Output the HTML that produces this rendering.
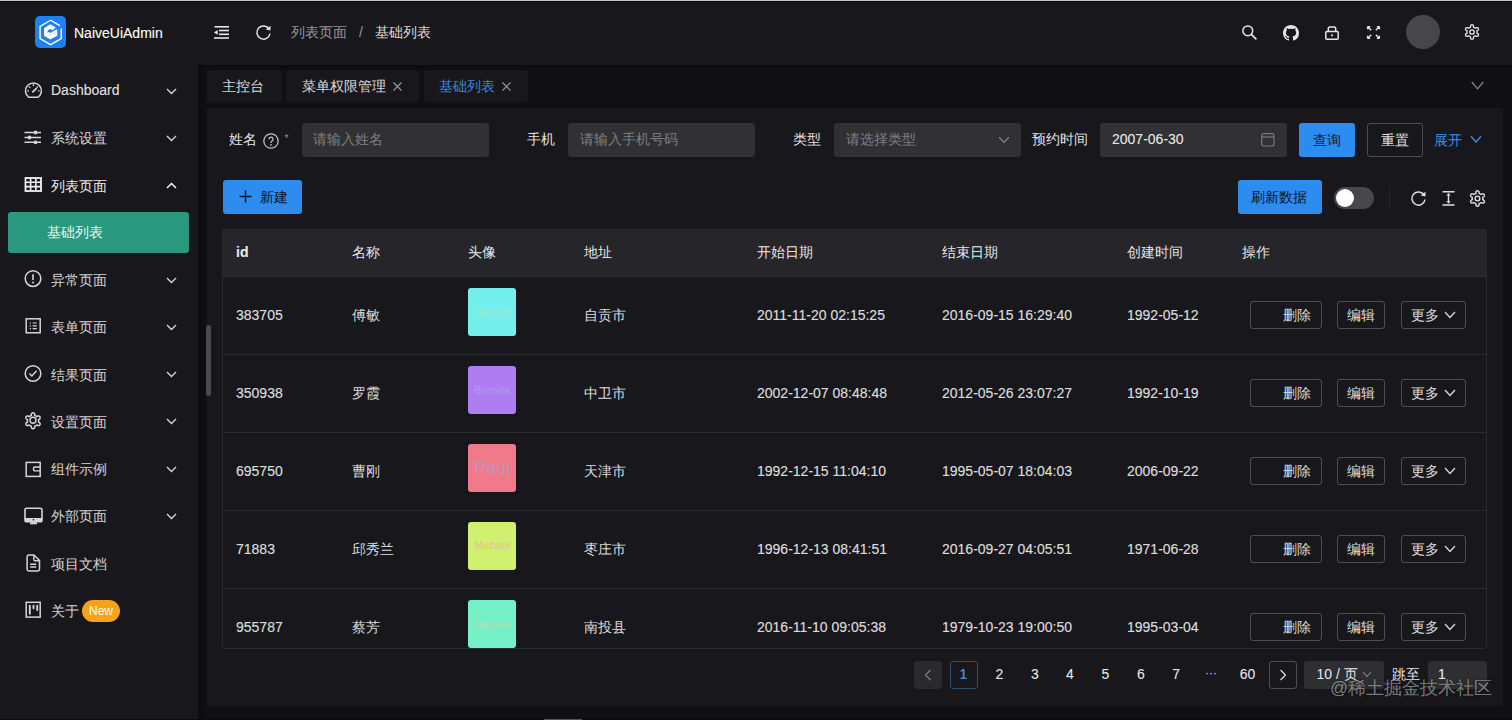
<!DOCTYPE html>
<html><head><meta charset="utf-8">
<style>
*{box-sizing:border-box;margin:0;padding:0}
html,body{width:1512px;height:720px;overflow:hidden;background:#101014;font-family:"Liberation Sans",sans-serif;font-size:14px;color:rgba(255,255,255,0.82)}
.a{position:absolute;white-space:nowrap;line-height:20px}
svg{position:absolute;overflow:visible}
#topline{position:absolute;left:0;top:0;width:1512px;height:1px;background:#c6c5ca;border-bottom:0}
#topdark{position:absolute;left:0;top:1px;width:1512px;height:1px;background:#0c0c10}
#header{position:absolute;left:0;top:2px;width:1512px;height:63px;background:#18181c}
#sider{position:absolute;left:0;top:65px;width:198px;height:655px;background:#18181c}
#card{position:absolute;left:207px;top:108px;width:1296px;height:598px;background:#18181c;border-radius:2px}
.tab{position:absolute;top:70px;height:32px;background:#18181c;border-radius:2px}
.inp{position:absolute;top:123px;height:34px;width:187px;background:#313134;border-radius:3px}
.ph{color:rgba(255,255,255,0.38)}
.btnp{position:absolute;background:#2d8cf0;border-radius:3px;color:#000}
.btnb{position:absolute;border:1px solid rgba(255,255,255,0.24);border-radius:3px}
#table{position:absolute;left:222px;top:229px;width:1265px;height:420px;border:1px solid #2a2a2e;border-radius:3px;overflow:hidden;background:#18181c}
#thead{position:absolute;left:0;top:0;width:1263px;height:47px;background:#26262a;border-bottom:1px solid #2c2c30}
.sep{position:absolute;left:0;width:1263px;height:1px;background:#2a2a2e}
.av{position:absolute;left:245px;width:48px;height:48px;border-radius:3px;overflow:hidden;font-size:11px;line-height:48px;text-align:center}
.mi{color:rgba(255,255,255,0.82)}
.b{-webkit-text-stroke:0.2px rgba(255,255,255,0.55)}
</style></head><body>
<div id="topline"></div><div id="topdark"></div>
<div id="header"></div>
<!-- logo -->
<div class="a" style="left:35px;top:16px;width:31px;height:32px;background:#1f80f6;border-radius:5px"></div>
<svg style="left:35px;top:16px" width="32" height="32" viewBox="0 0 32 32">
<path d="M24.8 9.6 L15.6 4.2 L5.1 10.3 L5.1 22.6 L15.6 28.6 L26.2 22.6 L26.2 12.4" fill="none" stroke="#fff" stroke-width="1.4"/>
<path d="M15.2 8.3 L20.8 11.5 L17.6 14.2 L15.2 13 L12.6 14.6 L12.6 17.8 L15.2 19.4 L22.3 15.2 L22.3 19.7 L15.2 23.6 L9.1 19.7 L9.1 12.3 Z" fill="#fff"/>
<path d="M13.6 15.9 L15.3 17 L21.5 13.4 L22.3 13.9 L22.3 15.2 L15.2 19.4 L12.6 17.8 L12.6 16.5 Z" fill="#fff"/>
</svg>
<div class="a b" style="left:74px;top:22.7px;color:#fff;font-size:14px;letter-spacing:0px">NaiveUiAdmin</div>
<!-- menu fold icon -->
<svg style="left:214px;top:26px" width="15" height="13" viewBox="0 0 15 13" fill="#e6e6e6">
<rect x="0.5" y="0" width="14.5" height="1.6"/><rect x="5" y="3.7" width="10" height="1.6"/><rect x="5" y="7.5" width="10" height="1.6"/><rect x="0" y="11.2" width="15" height="1.6"/>
<path d="M0 6.4 L3.6 4 L3.6 8.8 Z"/>
</svg>
<!-- reload -->
<svg style="left:255px;top:24px" width="17" height="17" viewBox="0 0 17 17">
<path d="M14.2 5.2 A6.6 6.6 0 1 0 15 9.5" fill="none" stroke="#e6e6e6" stroke-width="1.5"/>
<path d="M15.6 1.8 L15.4 6.6 L10.8 5.6 Z" fill="#e6e6e6"/>
</svg>
<div class="a" style="left:291px;top:22.3px;color:rgba(255,255,255,0.55)">列表页面</div>
<div class="a" style="left:359px;top:22.3px;color:rgba(255,255,255,0.55)">/</div>
<div class="a" style="left:375px;top:22.3px;color:rgba(255,255,255,0.85)">基础列表</div>
<!-- search -->
<svg style="left:1242px;top:25px" width="15" height="15" viewBox="0 0 15 15">
<circle cx="5.8" cy="5.8" r="4.9" fill="none" stroke="#e6e6e6" stroke-width="1.5"/>
<path d="M9.4 9.4 L14.4 14.4" stroke="#e6e6e6" stroke-width="1.6"/>
</svg>
<!-- github -->
<svg style="left:1283px;top:25px" width="16" height="16" viewBox="0 0 16 16">
<path fill="#e6e6e6" d="M8 0C3.58 0 0 3.58 0 8c0 3.54 2.29 6.53 5.47 7.59.4.07.55-.17.55-.38 0-.19-.01-.82-.01-1.49-2.01.37-2.53-.49-2.69-.94-.09-.23-.48-.94-.82-1.13-.28-.15-.68-.52-.01-.53.63-.01 1.08.58 1.23.82.72 1.21 1.87.87 2.33.66.07-.52.28-.87.51-1.07-1.78-.2-3.64-.89-3.64-3.95 0-.87.31-1.59.82-2.15-.08-.2-.36-1.02.08-2.12 0 0 .67-.21 2.2.82.64-.18 1.32-.27 2-.27.68 0 1.36.09 2 .27 1.53-1.04 2.2-.82 2.2-.82.44 1.1.16 1.92.08 2.12.51.56.82 1.27.82 2.15 0 3.07-1.87 3.75-3.65 3.95.29.25.54.73.54 1.48 0 1.07-.01 1.93-.01 2.2 0 .21.15.46.55.38A8.013 8.013 0 0016 8c0-4.42-3.58-8-8-8z"/>
</svg>
<!-- lock -->
<svg style="left:1325px;top:25px" width="14" height="15" viewBox="0 0 14 15">
<rect x="0.8" y="6.6" width="12.4" height="7.6" rx="1" fill="none" stroke="#e6e6e6" stroke-width="1.5"/>
<path d="M3.3 6.6 V3.6 A1.6 1.6 0 0 1 4.9 2 H9.1 A1.6 1.6 0 0 1 10.7 3.6 V6.6" fill="none" stroke="#e6e6e6" stroke-width="1.5"/>
<rect x="6.2" y="9.3" width="1.6" height="2" fill="#e6e6e6"/>
</svg>
<!-- fullscreen -->
<svg style="left:1367px;top:26px" width="13" height="13" viewBox="0 0 13 13" fill="none" stroke="#e6e6e6" stroke-width="1.4">
<path d="M0.8 0.8 L4.2 4.2 M0.6 0.6 h2.6 M0.6 0.6 v2.6"/>
<path d="M12.2 0.8 L8.8 4.2 M12.4 0.6 h-2.6 M12.4 0.6 v2.6"/>
<path d="M0.8 12.2 L4.2 8.8 M0.6 12.4 h2.6 M0.6 12.4 v-2.6"/>
<path d="M12.2 12.2 L8.8 8.8 M12.4 12.4 h-2.6 M12.4 12.4 v-2.6"/>
</svg>
<div class="a" style="left:1406px;top:15px;width:34px;height:34px;border-radius:50%;background:#474749"></div>
<!-- gear -->
<svg style="left:1464px;top:24px" width="16" height="16" viewBox="0 0 16 16">
<path d="M13.00 8.00 L13.00 8.22 L12.98 8.44 L12.96 8.65 L12.92 8.87 L12.88 9.08 L13.82 9.56 L14.17 9.94 L14.37 10.32 L14.48 10.68 L14.50 11.03 L14.45 11.36 L14.32 11.65 L14.13 11.91 L13.88 12.11 L13.56 12.27 L13.19 12.36 L12.77 12.37 L12.26 12.26 L11.38 11.69 L11.21 11.83 L11.04 11.97 L10.87 12.10 L10.69 12.22 L10.50 12.33 L10.31 12.44 L10.11 12.53 L9.91 12.62 L9.71 12.70 L9.50 12.77 L9.56 13.82 L9.40 14.31 L9.18 14.68 L8.92 14.95 L8.63 15.15 L8.32 15.26 L8.00 15.30 L7.68 15.26 L7.37 15.15 L7.08 14.95 L6.82 14.68 L6.60 14.31 L6.44 13.82 L6.50 12.77 L6.29 12.70 L6.09 12.62 L5.89 12.53 L5.69 12.44 L5.50 12.33 L5.31 12.22 L5.13 12.10 L4.96 11.97 L4.79 11.83 L4.62 11.69 L3.74 12.26 L3.23 12.37 L2.81 12.36 L2.44 12.27 L2.12 12.11 L1.87 11.91 L1.68 11.65 L1.55 11.36 L1.50 11.03 L1.52 10.68 L1.63 10.32 L1.83 9.94 L2.18 9.56 L3.12 9.08 L3.08 8.87 L3.04 8.65 L3.02 8.44 L3.00 8.22 L3.00 8.00 L3.00 7.78 L3.02 7.56 L3.04 7.35 L3.08 7.13 L3.12 6.92 L2.18 6.44 L1.83 6.06 L1.63 5.68 L1.52 5.32 L1.50 4.97 L1.55 4.64 L1.68 4.35 L1.87 4.09 L2.12 3.89 L2.44 3.73 L2.81 3.64 L3.23 3.63 L3.74 3.74 L4.62 4.31 L4.79 4.17 L4.96 4.03 L5.13 3.90 L5.31 3.78 L5.50 3.67 L5.69 3.56 L5.89 3.47 L6.09 3.38 L6.29 3.30 L6.50 3.23 L6.44 2.18 L6.60 1.69 L6.82 1.32 L7.08 1.05 L7.37 0.85 L7.68 0.74 L8.00 0.70 L8.32 0.74 L8.63 0.85 L8.92 1.05 L9.18 1.32 L9.40 1.69 L9.56 2.18 L9.50 3.23 L9.71 3.30 L9.91 3.38 L10.11 3.47 L10.31 3.56 L10.50 3.67 L10.69 3.78 L10.87 3.90 L11.04 4.03 L11.21 4.17 L11.38 4.31 L12.26 3.74 L12.77 3.63 L13.19 3.64 L13.56 3.73 L13.88 3.89 L14.13 4.09 L14.32 4.35 L14.45 4.64 L14.50 4.97 L14.48 5.32 L14.37 5.68 L14.17 6.06 L13.82 6.44 L12.88 6.92 L12.92 7.13 L12.96 7.35 L12.98 7.56 L13.00 7.78 Z" fill="none" stroke="#e6e6e6" stroke-width="1.3" stroke-linejoin="round"/>
<circle cx="8" cy="8" r="2.2" fill="none" stroke="#e6e6e6" stroke-width="1.3"/>
</svg>

<div id="sider"></div>
<!-- sidebar -->
<div class="a" style="left:8px;top:212px;width:181px;height:41px;background:#2a987e;border-radius:3px"></div>
<div class="a mi b" style="left:51px;top:80px;color:rgba(255,255,255,0.88)">Dashboard</div>
<svg style="left:166px;top:87.5px" width="11" height="7" viewBox="0 0 11 7"><path d="M1 1 L5.5 5.5 L10 1" fill="none" stroke="#d6d6d6" stroke-width="1.4"/></svg>
<div class="a mi" style="left:51px;top:128.3px">系统设置</div>
<svg style="left:166px;top:134.8px" width="11" height="7" viewBox="0 0 11 7"><path d="M1 1 L5.5 5.5 L10 1" fill="none" stroke="#d6d6d6" stroke-width="1.4"/></svg>
<div class="a mi" style="left:51px;top:175.5px;color:rgba(255,255,255,0.95)">列表页面</div>
<svg style="left:166px;top:182.0px" width="11" height="7" viewBox="0 0 11 7"><path d="M1 6 L5.5 1.5 L10 6" fill="none" stroke="#f4f4f4" stroke-width="1.5"/></svg>
<div class="a" style="left:47px;top:221.6px;color:#e4f8f0">基础列表</div>
<div class="a mi" style="left:51px;top:270.1px">异常页面</div>
<svg style="left:166px;top:276.6px" width="11" height="7" viewBox="0 0 11 7"><path d="M1 1 L5.5 5.5 L10 1" fill="none" stroke="#d6d6d6" stroke-width="1.4"/></svg>
<div class="a mi" style="left:51px;top:317.4px">表单页面</div>
<svg style="left:166px;top:323.9px" width="11" height="7" viewBox="0 0 11 7"><path d="M1 1 L5.5 5.5 L10 1" fill="none" stroke="#d6d6d6" stroke-width="1.4"/></svg>
<div class="a mi" style="left:51px;top:364.6px">结果页面</div>
<svg style="left:166px;top:371.1px" width="11" height="7" viewBox="0 0 11 7"><path d="M1 1 L5.5 5.5 L10 1" fill="none" stroke="#d6d6d6" stroke-width="1.4"/></svg>
<div class="a mi" style="left:51px;top:411.9px">设置页面</div>
<svg style="left:166px;top:418.4px" width="11" height="7" viewBox="0 0 11 7"><path d="M1 1 L5.5 5.5 L10 1" fill="none" stroke="#d6d6d6" stroke-width="1.4"/></svg>
<div class="a mi" style="left:51px;top:459.2px">组件示例</div>
<svg style="left:166px;top:465.7px" width="11" height="7" viewBox="0 0 11 7"><path d="M1 1 L5.5 5.5 L10 1" fill="none" stroke="#d6d6d6" stroke-width="1.4"/></svg>
<div class="a mi" style="left:51px;top:506.4px">外部页面</div>
<svg style="left:166px;top:512.9px" width="11" height="7" viewBox="0 0 11 7"><path d="M1 1 L5.5 5.5 L10 1" fill="none" stroke="#d6d6d6" stroke-width="1.4"/></svg>
<div class="a mi" style="left:51px;top:553.7px">项目文档</div>
<div class="a mi" style="left:51px;top:601.0px">关于</div>
<svg style="left:24px;top:81px" width="19" height="19" viewBox="0 0 19 19"><path d="M4.67 16.25 A7.95 7.95 0 1 1 14.23 16.25 Z" fill="none" stroke="#d6d6d6" stroke-width="1.5" stroke-linejoin="round"/><path d="M9.45 3.2 V5 M3.4 9.9 H5 M13.9 9.9 H15.5 M5.1 5.6 L6.2 6.7 M13.8 5.6 L12.7 6.7" stroke="#d6d6d6" stroke-width="1.4"/><path d="M8.8 10.9 L12.2 7.6" stroke="#d6d6d6" stroke-width="1.8" stroke-linecap="round"/></svg>
<svg style="left:24px;top:129px" width="19" height="19" viewBox="0 0 19 19"><path d="M0.5 3.5 H17 M0.5 8.5 H17 M0.5 13.3 H17" stroke="#d6d6d6" stroke-width="1.4"/><circle cx="11.5" cy="3.5" r="1.9" fill="#d6d6d6"/><circle cx="5.5" cy="8.5" r="1.9" fill="#d6d6d6"/><circle cx="11.5" cy="13.3" r="1.9" fill="#d6d6d6"/></svg>
<svg style="left:24px;top:176px" width="19" height="19" viewBox="0 0 19 19"><rect x="1.5" y="2" width="15.5" height="13" fill="none" stroke="#f4f4f4" stroke-width="1.8"/><path d="M1.5 6.3 H17 M1.5 10.6 H17 M6.6 2 V15 M11.8 2 V15" stroke="#f4f4f4" stroke-width="1.6"/></svg>
<svg style="left:24px;top:270px" width="19" height="19" viewBox="0 0 19 19"><circle cx="9" cy="8.6" r="7.8" fill="none" stroke="#d6d6d6" stroke-width="1.5"/><path d="M9 4.2 V10" stroke="#d6d6d6" stroke-width="1.6"/><circle cx="9" cy="12.6" r="1" fill="#d6d6d6"/></svg>
<svg style="left:24px;top:317px" width="19" height="19" viewBox="0 0 19 19"><rect x="2.2" y="1.8" width="14" height="14" fill="none" stroke="#d6d6d6" stroke-width="1.5"/><path d="M5.8 6 H7 M5.8 8.8 H7 M5.8 11.6 H7 M8.6 6 H12.8 M8.6 8.8 H12.8 M8.6 11.6 H12.8" stroke="#d6d6d6" stroke-width="1.2"/></svg>
<svg style="left:24px;top:365px" width="19" height="19" viewBox="0 0 19 19"><circle cx="9" cy="8.5" r="7.8" fill="none" stroke="#d6d6d6" stroke-width="1.5"/><path d="M5.4 8.4 L7.9 11 L12.6 5.8" fill="none" stroke="#d6d6d6" stroke-width="1.5"/></svg>
<svg style="left:24px;top:412px" width="19" height="19" viewBox="0 0 19 19"><path d="M14.60 8.80 L14.59 9.04 L14.58 9.29 L14.55 9.53 L14.51 9.77 L14.47 10.01 L15.45 10.53 L15.80 10.94 L16.01 11.35 L16.11 11.75 L16.13 12.13 L16.07 12.48 L15.93 12.80 L15.72 13.08 L15.44 13.31 L15.11 13.49 L14.71 13.59 L14.26 13.62 L13.72 13.52 L12.78 12.93 L12.60 13.09 L12.41 13.24 L12.21 13.39 L12.01 13.52 L11.80 13.65 L11.59 13.77 L11.37 13.88 L11.14 13.97 L10.92 14.06 L10.68 14.14 L10.73 15.25 L10.54 15.76 L10.30 16.15 L10.01 16.43 L9.69 16.64 L9.35 16.76 L9.00 16.80 L8.65 16.76 L8.31 16.64 L7.99 16.43 L7.70 16.15 L7.46 15.76 L7.27 15.25 L7.32 14.14 L7.08 14.06 L6.86 13.97 L6.63 13.88 L6.41 13.77 L6.20 13.65 L5.99 13.52 L5.79 13.39 L5.59 13.24 L5.40 13.09 L5.22 12.93 L4.28 13.52 L3.74 13.62 L3.29 13.59 L2.89 13.49 L2.56 13.31 L2.28 13.08 L2.07 12.80 L1.93 12.48 L1.87 12.13 L1.89 11.75 L1.99 11.35 L2.20 10.94 L2.55 10.53 L3.53 10.01 L3.49 9.77 L3.45 9.53 L3.42 9.29 L3.41 9.04 L3.40 8.80 L3.41 8.56 L3.42 8.31 L3.45 8.07 L3.49 7.83 L3.53 7.59 L2.55 7.07 L2.20 6.66 L1.99 6.25 L1.89 5.85 L1.87 5.47 L1.93 5.12 L2.07 4.80 L2.28 4.52 L2.56 4.29 L2.89 4.11 L3.29 4.01 L3.74 3.98 L4.28 4.08 L5.22 4.67 L5.40 4.51 L5.59 4.36 L5.79 4.21 L5.99 4.08 L6.20 3.95 L6.41 3.83 L6.63 3.72 L6.86 3.63 L7.08 3.54 L7.32 3.46 L7.27 2.35 L7.46 1.84 L7.70 1.45 L7.99 1.17 L8.31 0.96 L8.65 0.84 L9.00 0.80 L9.35 0.84 L9.69 0.96 L10.01 1.17 L10.30 1.45 L10.54 1.84 L10.73 2.35 L10.68 3.46 L10.92 3.54 L11.14 3.63 L11.37 3.72 L11.59 3.83 L11.80 3.95 L12.01 4.08 L12.21 4.21 L12.41 4.36 L12.60 4.51 L12.78 4.67 L13.72 4.08 L14.26 3.98 L14.71 4.01 L15.11 4.11 L15.44 4.29 L15.72 4.52 L15.93 4.80 L16.07 5.12 L16.13 5.47 L16.11 5.85 L16.01 6.25 L15.80 6.66 L15.45 7.07 L14.47 7.59 L14.51 7.83 L14.55 8.07 L14.58 8.31 L14.59 8.56 Z" fill="none" stroke="#d6d6d6" stroke-width="1.5" stroke-linejoin="round"/><circle cx="9" cy="8.3" r="3" fill="none" stroke="#d6d6d6" stroke-width="1.4"/></svg>
<svg style="left:24px;top:460.5px" width="19" height="19" viewBox="0 0 19 19"><rect x="2.2" y="1.4" width="14" height="14" fill="none" stroke="#d6d6d6" stroke-width="1.5"/><path d="M16.2 6 H10.8 A1.3 1.3 0 0 0 9.5 7.3 V8.6 A1.3 1.3 0 0 0 10.8 9.9 H16.2" fill="none" stroke="#d6d6d6" stroke-width="1.4"/></svg>
<svg style="left:24px;top:507px" width="19" height="19" viewBox="0 0 19 19"><rect x="1" y="1.2" width="17" height="13.5" rx="1.8" fill="none" stroke="#d6d6d6" stroke-width="1.6"/><rect x="1" y="11" width="17" height="3.7" fill="#d6d6d6"/><path d="M6 16.3 H13" stroke="#d6d6d6" stroke-width="2"/><path d="M8.6 14.5 V16 M10.4 14.5 V16" stroke="#d6d6d6" stroke-width="1.4"/><circle cx="9.5" cy="12.8" r="0.8" fill="#18181c"/></svg>
<svg style="left:24px;top:554px" width="19" height="19" viewBox="0 0 19 19"><path d="M4.8 1 H10 L15.5 6.5 V15.2 A1.7 1.7 0 0 1 13.8 16.9 H4.8 A1.7 1.7 0 0 1 3.1 15.2 V2.7 A1.7 1.7 0 0 1 4.8 1 Z" fill="none" stroke="#d6d6d6" stroke-width="1.5" stroke-linejoin="round"/><path d="M9.8 1.2 V5.4 A1.4 1.4 0 0 0 11.2 6.8 H15.4" fill="none" stroke="#d6d6d6" stroke-width="1.4"/><path d="M6.2 10.2 H12.2 M6.2 13 H12.2" stroke="#d6d6d6" stroke-width="1.6"/></svg>
<svg style="left:24px;top:601px" width="19" height="19" viewBox="0 0 19 19"><rect x="2.2" y="1.3" width="14" height="14.8" fill="none" stroke="#d6d6d6" stroke-width="1.5"/><path d="M5.8 4.8 V12.8 M9.5 4.8 V7.3 M13.2 4.8 V9" stroke="#d6d6d6" stroke-width="1.9" stroke-linecap="round"/></svg>
<div class="a" style="left:82px;top:600px;width:38px;height:22px;border-radius:11px;background:#f5a31a;color:#fff;font-size:12px;line-height:22px;text-align:center">New</div>

<div class="a" style="left:198px;top:65px;width:9px;height:655px;background:linear-gradient(to right,rgba(0,0,0,0.22),rgba(0,0,0,0))"></div>
<div class="a" style="left:198px;top:65px;width:1314px;height:6px;background:linear-gradient(to bottom,rgba(0,0,0,0.22),rgba(0,0,0,0))"></div>
<div class="tab" style="left:207px;width:75px"></div>
<div class="tab" style="left:286px;width:133px"></div>
<div class="tab" style="left:424px;width:104px"></div>
<div id="card"></div>
<!-- tabs -->
<div class="a" style="left:222px;top:75.7px;color:rgba(255,255,255,0.85)">主控台</div>
<div class="a" style="left:302px;top:75.7px;color:rgba(255,255,255,0.85)">菜单权限管理</div>
<svg style="left:393px;top:82.3px" width="9" height="9" viewBox="0 0 9 9"><path d="M0.5 0.5 L8.5 8.5 M8.5 0.5 L0.5 8.5" stroke="#9a9a9c" stroke-width="1.1"/></svg>
<div class="a" style="left:439px;top:75.7px;color:#3a86d8">基础列表</div>
<svg style="left:502px;top:82.3px" width="9" height="9" viewBox="0 0 9 9"><path d="M0.5 0.5 L8.5 8.5 M8.5 0.5 L0.5 8.5" stroke="#9a9a9c" stroke-width="1.1"/></svg>
<svg style="left:1471px;top:81px" width="13" height="9" viewBox="0 0 13 9"><path d="M0.8 1 L6.5 7.8 L12.2 1" fill="none" stroke="#88888a" stroke-width="1.2"/></svg>
<!-- form -->
<div class="a" style="left:229px;top:129px;color:rgba(255,255,255,0.9)">姓名</div>
<svg style="left:263px;top:132.6px" width="17" height="17" viewBox="0 0 17 17"><circle cx="8" cy="8" r="7.2" fill="none" stroke="#c8c8c8" stroke-width="1.2"/><path d="M5.9 6.3 A2.1 2.1 0 1 1 8.8 8.2 C8.2 8.5 8 8.9 8 9.6 V10" fill="none" stroke="#c8c8c8" stroke-width="1.2"/><circle cx="8" cy="11.9" r="0.8" fill="#c8c8c8"/></svg>
<div class="a" style="left:284.5px;top:133px;color:#c87898;font-size:10px;line-height:12px">*</div>
<div class="inp" style="left:302px"></div>
<div class="a ph" style="left:313px;top:129px">请输入姓名</div>
<div class="a" style="left:527px;top:129px;color:rgba(255,255,255,0.9)">手机</div>
<div class="inp" style="left:568px"></div>
<div class="a ph" style="left:580px;top:129px">请输入手机号码</div>
<div class="a" style="left:793px;top:129px;color:rgba(255,255,255,0.9)">类型</div>
<div class="inp" style="left:834px"></div>
<div class="a ph" style="left:846px;top:129px">请选择类型</div>
<svg style="left:998px;top:136px" width="12" height="8" viewBox="0 0 12 8"><path d="M1 1.2 L6 6.5 L11 1.2" fill="none" stroke="#8a8a8c" stroke-width="1.2"/></svg>
<div class="a" style="left:1032px;top:129px;color:rgba(255,255,255,0.9)">预约时间</div>
<div class="inp" style="left:1100px"></div>
<div class="a b" style="left:1112px;top:129px;color:rgba(255,255,255,0.9)">2007-06-30</div>
<svg style="left:1261px;top:133px" width="14" height="14" viewBox="0 0 14 14"><rect x="0.7" y="0.7" width="12.3" height="12.3" rx="2" fill="none" stroke="#7a7a7c" stroke-width="1.2"/><path d="M0.7 4 H13" stroke="#7a7a7c" stroke-width="1.2"/></svg>
<div class="btnp" style="left:1299px;top:123px;width:56px;height:34px"></div>
<div class="a" style="left:1313px;top:130px;color:#101a2a">查询</div>
<div class="btnb" style="left:1367px;top:123px;width:56px;height:34px"></div>
<div class="a" style="left:1381px;top:130px;color:rgba(255,255,255,0.9)">重置</div>
<div class="a" style="left:1434px;top:130px;color:#3b8fe6">展开</div>
<svg style="left:1470px;top:135px" width="12" height="9" viewBox="0 0 12 9"><path d="M1 1.2 L6 7 L11 1.2" fill="none" stroke="#3b8fe6" stroke-width="1.4"/></svg>
<!-- toolbar -->
<div class="btnp" style="left:223px;top:180px;width:79px;height:34px"></div>
<svg style="left:239px;top:190px" width="13" height="13" viewBox="0 0 13 13"><path d="M6.5 0.5 V12.5 M0.5 6.5 H12.5" stroke="#0a1424" stroke-width="1.5"/></svg>
<div class="a" style="left:260px;top:187px;color:#0a1424">新建</div>
<div class="btnp" style="left:1238px;top:180px;width:84px;height:34px"></div>
<div class="a" style="left:1251px;top:187px;color:#0a1424">刷新数据</div>
<div class="a" style="left:1334px;top:187px;width:40px;height:22px;border-radius:11px;background:#48484c"></div>
<div class="a" style="left:1336px;top:189px;width:18px;height:18px;border-radius:50%;background:#fff"></div>
<div class="a" style="left:1389px;top:187px;width:1px;height:22px;background:#26262a"></div>
<svg style="left:1410px;top:190px" width="17" height="17" viewBox="0 0 17 17"><path d="M14.2 5.2 A6.6 6.6 0 1 0 15 9.5" fill="none" stroke="#e0e0e0" stroke-width="1.5"/><path d="M15.6 1.8 L15.4 6.6 L10.8 5.6 Z" fill="#e0e0e0"/></svg>
<svg style="left:1442px;top:191px" width="13" height="15" viewBox="0 0 13 15"><path d="M0.5 0.8 H12.5 M0.5 14 H12.5 M6.5 2.5 V12.3" stroke="#e0e0e0" stroke-width="1.4"/><path d="M4.3 4.6 L6.5 2.2 L8.7 4.6 Z M4.3 10.2 L6.5 12.6 L8.7 10.2 Z" fill="#e0e0e0"/></svg>
<svg style="left:1469px;top:190px" width="17" height="17" viewBox="0 0 16 16"><path d="M13.00 8.00 L13.00 8.22 L12.98 8.44 L12.96 8.65 L12.92 8.87 L12.88 9.08 L13.82 9.56 L14.17 9.94 L14.37 10.32 L14.48 10.68 L14.50 11.03 L14.45 11.36 L14.32 11.65 L14.13 11.91 L13.88 12.11 L13.56 12.27 L13.19 12.36 L12.77 12.37 L12.26 12.26 L11.38 11.69 L11.21 11.83 L11.04 11.97 L10.87 12.10 L10.69 12.22 L10.50 12.33 L10.31 12.44 L10.11 12.53 L9.91 12.62 L9.71 12.70 L9.50 12.77 L9.56 13.82 L9.40 14.31 L9.18 14.68 L8.92 14.95 L8.63 15.15 L8.32 15.26 L8.00 15.30 L7.68 15.26 L7.37 15.15 L7.08 14.95 L6.82 14.68 L6.60 14.31 L6.44 13.82 L6.50 12.77 L6.29 12.70 L6.09 12.62 L5.89 12.53 L5.69 12.44 L5.50 12.33 L5.31 12.22 L5.13 12.10 L4.96 11.97 L4.79 11.83 L4.62 11.69 L3.74 12.26 L3.23 12.37 L2.81 12.36 L2.44 12.27 L2.12 12.11 L1.87 11.91 L1.68 11.65 L1.55 11.36 L1.50 11.03 L1.52 10.68 L1.63 10.32 L1.83 9.94 L2.18 9.56 L3.12 9.08 L3.08 8.87 L3.04 8.65 L3.02 8.44 L3.00 8.22 L3.00 8.00 L3.00 7.78 L3.02 7.56 L3.04 7.35 L3.08 7.13 L3.12 6.92 L2.18 6.44 L1.83 6.06 L1.63 5.68 L1.52 5.32 L1.50 4.97 L1.55 4.64 L1.68 4.35 L1.87 4.09 L2.12 3.89 L2.44 3.73 L2.81 3.64 L3.23 3.63 L3.74 3.74 L4.62 4.31 L4.79 4.17 L4.96 4.03 L5.13 3.90 L5.31 3.78 L5.50 3.67 L5.69 3.56 L5.89 3.47 L6.09 3.38 L6.29 3.30 L6.50 3.23 L6.44 2.18 L6.60 1.69 L6.82 1.32 L7.08 1.05 L7.37 0.85 L7.68 0.74 L8.00 0.70 L8.32 0.74 L8.63 0.85 L8.92 1.05 L9.18 1.32 L9.40 1.69 L9.56 2.18 L9.50 3.23 L9.71 3.30 L9.91 3.38 L10.11 3.47 L10.31 3.56 L10.50 3.67 L10.69 3.78 L10.87 3.90 L11.04 4.03 L11.21 4.17 L11.38 4.31 L12.26 3.74 L12.77 3.63 L13.19 3.64 L13.56 3.73 L13.88 3.89 L14.13 4.09 L14.32 4.35 L14.45 4.64 L14.50 4.97 L14.48 5.32 L14.37 5.68 L14.17 6.06 L13.82 6.44 L12.88 6.92 L12.92 7.13 L12.96 7.35 L12.98 7.56 L13.00 7.78 Z" fill="none" stroke="#e0e0e0" stroke-width="1.3" stroke-linejoin="round"/><circle cx="8" cy="8" r="2.2" fill="none" stroke="#e0e0e0" stroke-width="1.3"/></svg>


<!-- table -->
<div id="table"><div id="thead"></div>
<div class="a b" style="left:13.0px;top:12.3px;font-weight:bold;color:rgba(255,255,255,0.92);">id</div>
<div class="a" style="left:129.0px;top:12.3px;color:rgba(255,255,255,0.9);">名称</div>
<div class="a" style="left:245.0px;top:12.3px;color:rgba(255,255,255,0.9);">头像</div>
<div class="a" style="left:361.0px;top:12.3px;color:rgba(255,255,255,0.9);">地址</div>
<div class="a" style="left:534.0px;top:12.3px;color:rgba(255,255,255,0.9);">开始日期</div>
<div class="a" style="left:719.0px;top:12.3px;color:rgba(255,255,255,0.9);">结束日期</div>
<div class="a" style="left:904.0px;top:12.3px;color:rgba(255,255,255,0.9);">创建时间</div>
<div class="a" style="left:1019.0px;top:12.3px;color:rgba(255,255,255,0.9);">操作</div>
<div class="sep" style="top:124px"></div>
<div class="a b" style="left:13.0px;top:75.0px;color:rgba(255,255,255,0.86)">383705</div>
<div class="a" style="left:129.0px;top:75.0px;color:rgba(255,255,255,0.86)">傅敏</div>
<div class="a" style="left:361.0px;top:75.0px;color:rgba(255,255,255,0.86)">自贡市</div>
<div class="a b" style="left:534.0px;top:75.0px;color:rgba(255,255,255,0.86)">2011-11-20 02:15:25</div>
<div class="a b" style="left:719.0px;top:75.0px;color:rgba(255,255,255,0.86)">2016-09-15 16:29:40</div>
<div class="a b" style="left:904.0px;top:75.0px;color:rgba(255,255,255,0.86)">1992-05-12</div>
<div class="av" style="left:245.0px;top:58.0px;background:#75eeee;color:#a8e8c0;font-size:10.8px">Lennon</div>
<div class="btnb" style="left:1027.0px;top:71.0px;width:72px;height:28px"></div>
<div class="a" style="left:1060.0px;top:75.0px;color:rgba(255,255,255,0.86)">删除</div>
<div class="btnb" style="left:1114.0px;top:71.0px;width:48px;height:28px"></div>
<div class="a" style="left:1124.0px;top:75.0px;color:rgba(255,255,255,0.86)">编辑</div>
<div class="btnb" style="left:1178.0px;top:71.0px;width:65px;height:28px"></div>
<div class="a" style="left:1187.5px;top:75.0px;color:rgba(255,255,255,0.86)">更多</div>
<svg style="left:1221.0px;top:81.0px" width="12" height="8" viewBox="0 0 12 8"><path d="M1 1 L6 6.5 L11 1" fill="none" stroke="#d8d8d8" stroke-width="1.3"/></svg>
<div class="sep" style="top:202px"></div>
<div class="a b" style="left:13.0px;top:153.0px;color:rgba(255,255,255,0.86)">350938</div>
<div class="a" style="left:129.0px;top:153.0px;color:rgba(255,255,255,0.86)">罗霞</div>
<div class="a" style="left:361.0px;top:153.0px;color:rgba(255,255,255,0.86)">中卫市</div>
<div class="a b" style="left:534.0px;top:153.0px;color:rgba(255,255,255,0.86)">2002-12-07 08:48:48</div>
<div class="a b" style="left:719.0px;top:153.0px;color:rgba(255,255,255,0.86)">2012-05-26 23:07:27</div>
<div class="a b" style="left:904.0px;top:153.0px;color:rgba(255,255,255,0.86)">1992-10-19</div>
<div class="av" style="left:245.0px;top:136.0px;background:#b07cf2;color:#a8a0ec;font-size:11.2px">Brenda</div>
<div class="btnb" style="left:1027.0px;top:149.0px;width:72px;height:28px"></div>
<div class="a" style="left:1060.0px;top:153.0px;color:rgba(255,255,255,0.86)">删除</div>
<div class="btnb" style="left:1114.0px;top:149.0px;width:48px;height:28px"></div>
<div class="a" style="left:1124.0px;top:153.0px;color:rgba(255,255,255,0.86)">编辑</div>
<div class="btnb" style="left:1178.0px;top:149.0px;width:65px;height:28px"></div>
<div class="a" style="left:1187.5px;top:153.0px;color:rgba(255,255,255,0.86)">更多</div>
<svg style="left:1221.0px;top:159.0px" width="12" height="8" viewBox="0 0 12 8"><path d="M1 1 L6 6.5 L11 1" fill="none" stroke="#d8d8d8" stroke-width="1.3"/></svg>
<div class="sep" style="top:280px"></div>
<div class="a b" style="left:13.0px;top:231.0px;color:rgba(255,255,255,0.86)">695750</div>
<div class="a" style="left:129.0px;top:231.0px;color:rgba(255,255,255,0.86)">曹刚</div>
<div class="a" style="left:361.0px;top:231.0px;color:rgba(255,255,255,0.86)">天津市</div>
<div class="a b" style="left:534.0px;top:231.0px;color:rgba(255,255,255,0.86)">1992-12-15 11:04:10</div>
<div class="a b" style="left:719.0px;top:231.0px;color:rgba(255,255,255,0.86)">1995-05-07 18:04:03</div>
<div class="a b" style="left:904.0px;top:231.0px;color:rgba(255,255,255,0.86)">2006-09-22</div>
<div class="av" style="left:245.0px;top:214.0px;background:#f07a8a;color:#c890b8;font-size:18px">Paul</div>
<div class="btnb" style="left:1027.0px;top:227.0px;width:72px;height:28px"></div>
<div class="a" style="left:1060.0px;top:231.0px;color:rgba(255,255,255,0.86)">删除</div>
<div class="btnb" style="left:1114.0px;top:227.0px;width:48px;height:28px"></div>
<div class="a" style="left:1124.0px;top:231.0px;color:rgba(255,255,255,0.86)">编辑</div>
<div class="btnb" style="left:1178.0px;top:227.0px;width:65px;height:28px"></div>
<div class="a" style="left:1187.5px;top:231.0px;color:rgba(255,255,255,0.86)">更多</div>
<svg style="left:1221.0px;top:237.0px" width="12" height="8" viewBox="0 0 12 8"><path d="M1 1 L6 6.5 L11 1" fill="none" stroke="#d8d8d8" stroke-width="1.3"/></svg>
<div class="sep" style="top:358px"></div>
<div class="a b" style="left:13.0px;top:309.0px;color:rgba(255,255,255,0.86)">71883</div>
<div class="a" style="left:129.0px;top:309.0px;color:rgba(255,255,255,0.86)">邱秀兰</div>
<div class="a" style="left:361.0px;top:309.0px;color:rgba(255,255,255,0.86)">枣庄市</div>
<div class="a b" style="left:534.0px;top:309.0px;color:rgba(255,255,255,0.86)">1996-12-13 08:41:51</div>
<div class="a b" style="left:719.0px;top:309.0px;color:rgba(255,255,255,0.86)">2016-09-27 04:05:51</div>
<div class="a b" style="left:904.0px;top:309.0px;color:rgba(255,255,255,0.86)">1971-06-28</div>
<div class="av" style="left:245.0px;top:292.0px;background:#d2f070;color:#e0c098;font-size:10.4px">Michael</div>
<div class="btnb" style="left:1027.0px;top:305.0px;width:72px;height:28px"></div>
<div class="a" style="left:1060.0px;top:309.0px;color:rgba(255,255,255,0.86)">删除</div>
<div class="btnb" style="left:1114.0px;top:305.0px;width:48px;height:28px"></div>
<div class="a" style="left:1124.0px;top:309.0px;color:rgba(255,255,255,0.86)">编辑</div>
<div class="btnb" style="left:1178.0px;top:305.0px;width:65px;height:28px"></div>
<div class="a" style="left:1187.5px;top:309.0px;color:rgba(255,255,255,0.86)">更多</div>
<svg style="left:1221.0px;top:315.0px" width="12" height="8" viewBox="0 0 12 8"><path d="M1 1 L6 6.5 L11 1" fill="none" stroke="#d8d8d8" stroke-width="1.3"/></svg>
<div class="a b" style="left:13.0px;top:387.0px;color:rgba(255,255,255,0.86)">955787</div>
<div class="a" style="left:129.0px;top:387.0px;color:rgba(255,255,255,0.86)">蔡芳</div>
<div class="a" style="left:361.0px;top:387.0px;color:rgba(255,255,255,0.86)">南投县</div>
<div class="a b" style="left:534.0px;top:387.0px;color:rgba(255,255,255,0.86)">2016-11-10 09:05:38</div>
<div class="a b" style="left:719.0px;top:387.0px;color:rgba(255,255,255,0.86)">1979-10-23 19:00:50</div>
<div class="a b" style="left:904.0px;top:387.0px;color:rgba(255,255,255,0.86)">1995-03-04</div>
<div class="av" style="left:245.0px;top:370.0px;background:#76f0c6;color:#b8e0b0;font-size:9px">Margaret</div>
<div class="btnb" style="left:1027.0px;top:383.0px;width:72px;height:28px"></div>
<div class="a" style="left:1060.0px;top:387.0px;color:rgba(255,255,255,0.86)">删除</div>
<div class="btnb" style="left:1114.0px;top:383.0px;width:48px;height:28px"></div>
<div class="a" style="left:1124.0px;top:387.0px;color:rgba(255,255,255,0.86)">编辑</div>
<div class="btnb" style="left:1178.0px;top:383.0px;width:65px;height:28px"></div>
<div class="a" style="left:1187.5px;top:387.0px;color:rgba(255,255,255,0.86)">更多</div>
<svg style="left:1221.0px;top:393.0px" width="12" height="8" viewBox="0 0 12 8"><path d="M1 1 L6 6.5 L11 1" fill="none" stroke="#d8d8d8" stroke-width="1.3"/></svg>
</div>
<!-- pagination -->
<div class="a" style="left:914px;top:661px;width:28px;height:28px;border-radius:3px;background:#2a2a2e"></div>
<svg style="left:924px;top:669px" width="8" height="12" viewBox="0 0 8 12"><path d="M6.5 1 L1.5 6 L6.5 11" fill="none" stroke="#808084" stroke-width="1.2"/></svg>
<div class="a" style="left:949.5px;top:661px;width:28px;height:28px;border-radius:3px;border:1px solid #2a4c70"></div>
<div class="a b" style="left:949.5px;top:663.6px;width:28px;text-align:center;color:#3b8fe6">1</div>
<div class="a b" style="left:985.3px;top:663.6px;width:28px;text-align:center;color:rgba(255,255,255,0.9)">2</div>
<div class="a b" style="left:1020.9px;top:663.6px;width:28px;text-align:center;color:rgba(255,255,255,0.9)">3</div>
<div class="a b" style="left:1056.0px;top:663.6px;width:28px;text-align:center;color:rgba(255,255,255,0.9)">4</div>
<div class="a b" style="left:1091.4px;top:663.6px;width:28px;text-align:center;color:rgba(255,255,255,0.9)">5</div>
<div class="a b" style="left:1127.0px;top:663.6px;width:28px;text-align:center;color:rgba(255,255,255,0.9)">6</div>
<div class="a b" style="left:1162.2px;top:663.6px;width:28px;text-align:center;color:rgba(255,255,255,0.9)">7</div>
<div class="a" style="left:1197px;top:662.5px;width:28px;text-align:center;color:rgba(255,255,255,0.8);font-size:12px">···</div>
<div class="a b" style="left:1233.5px;top:663.6px;width:28px;text-align:center;color:rgba(255,255,255,0.9)">60</div>
<div class="btnb" style="left:1269px;top:661px;width:28px;height:28px"></div>
<svg style="left:1279px;top:669px" width="8" height="12" viewBox="0 0 8 12"><path d="M1.5 1 L6.5 6 L1.5 11" fill="none" stroke="#e0e0e0" stroke-width="1.2"/></svg>
<div class="a" style="left:1304px;top:661px;width:80px;height:28px;border-radius:3px;background:#2f2f33"></div>
<div class="a" style="left:1316.5px;top:663.6px;color:rgba(255,255,255,0.9)">10 / 页</div>
<svg style="left:1362px;top:671px" width="10" height="7" viewBox="0 0 10 7"><path d="M1 1 L5 5.5 L9 1" fill="none" stroke="#8a8a8c" stroke-width="1.1"/></svg>
<div class="a" style="left:1392px;top:663.6px;color:rgba(255,255,255,0.9)">跳至</div>
<div class="a" style="left:1428px;top:661px;width:59px;height:28px;border-radius:3px;background:#2f2f33"></div>
<div class="a b" style="left:1438px;top:663.6px;color:rgba(255,255,255,0.9)">1</div>
<div class="a" style="left:1330px;top:677px;font-size:17.8px;line-height:22px;color:rgba(255,255,255,0.46);text-shadow:0 0 2px rgba(0,0,0,0.7)">@稀土掘金技术社区</div>
<div class="a" style="left:206px;top:325px;width:5px;height:71px;border-radius:3px;background:#4a4a4e"></div>
<div class="a" style="left:0;top:719px;width:1512px;height:1px;background:#0a0a0c"></div>
<div class="a" style="left:544px;top:719px;width:38px;height:1px;background:#55555a"></div>
</body></html>
